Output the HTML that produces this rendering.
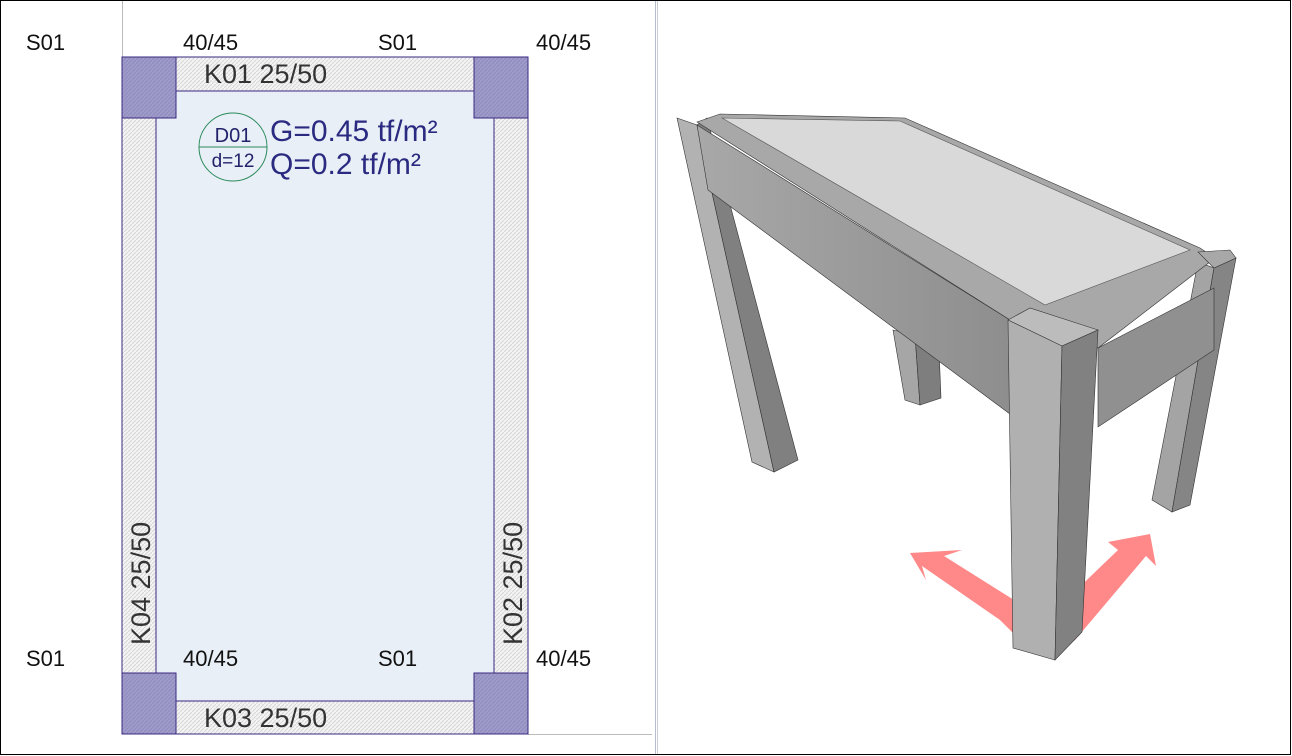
<!DOCTYPE html>
<html><head><meta charset="utf-8"><style>
html,body{margin:0;padding:0;background:#fff}
svg{display:block}
text{font-family:"Liberation Sans",sans-serif}
</style></head><body>
<svg width="1292" height="756" viewBox="0 0 1292 756" xmlns="http://www.w3.org/2000/svg">
<defs>
<pattern id="h" width="4" height="4" patternUnits="userSpaceOnUse"><rect width="4" height="4" fill="#f4f4f4"/><path d="M0 4L4 0" stroke="#d6d6d6" stroke-width="1"/></pattern>
<pattern id="c" width="4" height="4" patternUnits="userSpaceOnUse"><rect width="4" height="4" fill="#9f9bc9"/><path d="M0 4L4 0" stroke="#8f8abd" stroke-width="1"/></pattern>
<linearGradient id="g1" x1="0" x2="1"><stop offset="0" stop-color="#a8a8a8"/><stop offset="1" stop-color="#8e8e8e"/></linearGradient>
</defs>
<rect x="0.5" y="0.5" width="1290" height="754" fill="#fff" stroke="#000"/>
<line x1="122.5" y1="1" x2="122.5" y2="57" stroke="#bbb"/>
<line x1="528" y1="734.5" x2="652" y2="734.5" stroke="#bbb"/>
<line x1="655.5" y1="1" x2="655.5" y2="754" stroke="#b8bccc"/>
<line x1="657.5" y1="1" x2="657.5" y2="754" stroke="#c8ccd8"/>
<rect x="156" y="91" width="338" height="610" fill="#e8eff7"/>
<rect x="176" y="57" width="298" height="34" fill="url(#h)" stroke="#3a2a80"/>
<rect x="176" y="701" width="298" height="33" fill="url(#h)" stroke="#3a2a80"/>
<rect x="122" y="118" width="34" height="555" fill="url(#h)" stroke="#3a2a80"/>
<rect x="494" y="118" width="34" height="555" fill="url(#h)" stroke="#3a2a80"/>
<rect x="122" y="57" width="54" height="61" fill="url(#c)" stroke="#3a2a80"/>
<rect x="474" y="57" width="54" height="61" fill="url(#c)" stroke="#3a2a80"/>
<rect x="122" y="673" width="54" height="61" fill="url(#c)" stroke="#3a2a80"/>
<rect x="474" y="673" width="54" height="61" fill="url(#c)" stroke="#3a2a80"/>
<g font-size="22" fill="#111">
<text x="26" y="50">S01</text><text x="183" y="50">40/45</text><text x="378" y="50">S01</text><text x="536" y="50">40/45</text>
<text x="26" y="666">S01</text><text x="183" y="666">40/45</text><text x="378" y="666">S01</text><text x="536" y="666">40/45</text>
</g>
<g font-size="27" fill="#333">
<text x="204" y="83">K01 25/50</text>
<text x="204" y="727">K03 25/50</text>
<text transform="translate(150,645) rotate(-90)">K04 25/50</text>
<text transform="translate(522,645) rotate(-90)">K02 25/50</text>
</g>
<circle cx="233" cy="147" r="34" fill="none" stroke="#2a8a5a"/>
<line x1="199" y1="147" x2="267" y2="147" stroke="#2a8a5a"/>
<text x="233" y="142" font-size="20" fill="#22226a" text-anchor="middle">D01</text>
<text x="233" y="167" font-size="19" fill="#22226a" text-anchor="middle">d=12</text>
<text x="270" y="141" font-size="30" fill="#2a2a80">G=0.45 tf/m²</text>
<text x="270" y="174" font-size="30" fill="#2a2a80">Q=0.2 tf/m²</text>
<g stroke="#333" stroke-width="0.6">
<polygon points="1020,640 1000,620 922,566 926,580 910,553 962,550 944,556 1030,610" fill="#ff8888" stroke="none"/>
<polygon points="1060,650 1040,625 1118,550 1108,542 1150,534 1156,566 1146,556 1075,640" fill="#ff8888" stroke="none"/>
<polygon points="893,330 915,335 920,405 905,400" fill="#a6a6a6"/>
<polygon points="915,335 938,325 941,398 920,405" fill="#7e7e7e"/>
<polygon points="1198,262 1214,268 1172,512 1152,500" fill="#a4a4a4"/>
<polygon points="1214,268 1236,258 1190,505 1172,512" fill="#858585"/>
<polygon points="677,118 697,125 774,472 752,462" fill="#b2b2b2"/>
<polygon points="697,125 707,118 798,460 774,472" fill="#808080"/>
<polygon points="697,122 720,114 905,118 1200,248 1215,258 1098,348 1062,330 1010,320" fill="#a8a8a8"/>
<polygon points="722,118 900,121 1190,250 1045,305" fill="#d9d9d9" stroke="#555"/>
<polygon points="697,125 1010,320 1010,414 708,190" fill="url(#g1)"/>
<polygon points="1098,348 1214,288 1214,350 1098,427" fill="#909090"/>
<polygon points="1008,320 1030,308 1098,330 1062,346" fill="#bcbcbc"/>
<polygon points="1008,320 1062,346 1055,660 1013,648" fill="#b0b0b0"/>
<polygon points="1062,346 1098,330 1082,632 1055,660" fill="#818181"/>
<polygon points="1198,252 1230,250 1236,258 1214,268" fill="#a8a8a8"/>
</g>
</svg>
</body></html>
